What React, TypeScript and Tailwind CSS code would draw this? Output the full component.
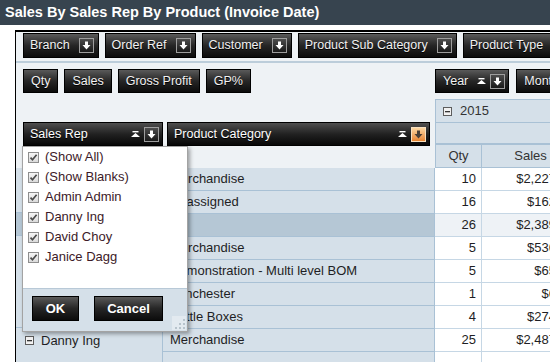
import type { ReactNode } from "react";

const sans = "font-['Liberation_Sans',Arial,sans-serif]";

type Row = { label: string; qty: string; sales: string; total?: boolean };

const rows: Row[] = [
  { label: "Merchandise", qty: "10", sales: "$2,227.72" },
  { label: "Unassigned", qty: "16", sales: "$162.00" },
  { label: "", qty: "26", sales: "$2,389.72", total: true },
  { label: "Merchandise", qty: "5", sales: "$536.40" },
  { label: "Demonstration - Multi level BOM", qty: "5", sales: "$65.00" },
  { label: "Winchester", qty: "1", sales: "$6.50" },
  { label: "Bottle Boxes", qty: "4", sales: "$274.80" },
  { label: "Merchandise", qty: "25", sales: "$2,487.50" },
  { label: "", qty: "", sales: "" },
];

const reps = ["(Show All)", "(Show Blanks)", "Admin Admin", "Danny Ing", "David Choy", "Janice Dagg"];

function ArrowBox({ active = false }: { active?: boolean }) {
  return (
    <span
      className={
        active
          ? "flex h-[15px] w-[15px] shrink-0 items-center justify-center border border-[#f7dfbf] bg-linear-to-b from-[#fbd6a0] to-[#e8842e]"
          : "flex h-[15px] w-[15px] shrink-0 items-center justify-center border border-[#9d9d9d] bg-linear-to-b from-[#4d4d4d] to-[#1a1a1a]"
      }
    >
      <svg width="9" height="9" viewBox="0 0 9 9">
        <path d="M3 0.5h3v3.5h2.5L4.5 8.5 0.5 4H3z" fill={active ? "#4a4038" : "#ffffff"} />
      </svg>
    </span>
  );
}

function SortIcon() {
  return (
    <svg width="9" height="6" viewBox="0 0 9 6" className="shrink-0">
      <rect x="1.5" y="0" width="6" height="1.4" fill="#ffffff" />
      <path d="M4.5 2 9 6H0z" fill="#ffffff" />
    </svg>
  );
}

function Collapse() {
  return (
    <svg width="9" height="9" viewBox="0 0 9 9" className="shrink-0">
      <rect x="0.5" y="0.5" width="8" height="8" fill="#f1f1f1" stroke="#5d5d5d" />
      <rect x="2" y="4" width="5" height="1.3" fill="#333333" />
    </svg>
  );
}

function Check() {
  return (
    <svg width="11" height="11" viewBox="0 0 11 11" className="shrink-0">
      <defs>
        <linearGradient id="cb" x1="0" y1="0" x2="0" y2="1">
          <stop offset="0" stopColor="#f7f7f7" />
          <stop offset="1" stopColor="#d9d9d9" />
        </linearGradient>
      </defs>
      <rect x="0.5" y="0.5" width="10" height="10" fill="url(#cb)" stroke="#8e8e8e" />
      <path d="M2.5 5.6 4.5 7.8 8.6 2.8" fill="none" stroke="#4a4a4a" strokeWidth="1.7" />
    </svg>
  );
}

function Btn({ children, h = "h-[25px]", px = "pl-[6px] pr-[4px]" }: { children: ReactNode; h?: string; px?: string }) {
  return (
    <div
      className={`flex ${h} ${px} shrink-0 items-center gap-[9px] whitespace-nowrap border border-black bg-linear-to-b from-[#5a5a5a] via-[#262626] to-[#0c0c0c] text-[12.5px] text-[#f2f2f2] [text-shadow:0_1px_0_#000]`}
    >
      {children}
    </div>
  );
}

function FieldHeader({ label, width, active = false }: { label: string; width: string; active?: boolean }) {
  return (
    <div
      className={`flex h-[24px] ${width} shrink-0 items-center border border-black bg-linear-to-b from-[#4f4f4f] via-[#222222] to-[#080808] pl-[6px] pr-[3px] text-[12.5px] text-white [text-shadow:0_1px_0_#000]`}
    >
      <span className="flex-1 whitespace-nowrap">{label}</span>
      <SortIcon />
      <span className="w-[4px]" />
      <ArrowBox active={active} />
    </div>
  );
}

export default function App() {
  return (
    <div className={`relative h-[362px] w-[550px] overflow-hidden bg-white ${sans}`}>
      <div className="h-[25px] whitespace-nowrap bg-[#37444f] pl-[5px] text-[14.5px] font-bold leading-[25px] text-white">
        Sales By Sales Rep By Product (Invoice Date)
      </div>

      <div className="ml-[15px] mt-[5px] h-[332px] overflow-hidden border-l border-t-2 border-black bg-[#eef2f5]">
        {/* Filter fields */}
        <div className="flex h-[31px] gap-[6px] border-b-2 border-[#bccdda] pl-[7px] pt-[1px]">
          {["Branch", "Order Ref", "Customer", "Product Sub Category", "Product Type"].map((f) => (
            <Btn key={f}>
              <span>{f}</span>
              <ArrowBox />
            </Btn>
          ))}
        </div>

        {/* Data fields and column fields */}
        <div className="flex h-[36px] pt-[6px]">
          <div className="flex w-[419px] shrink-0 gap-[6px] pl-[7px]">
            {["Qty", "Sales", "Gross Profit", "GP%"].map((f) => (
              <Btn key={f} h="h-[24px]" px="px-[7px]">
                {f}
              </Btn>
            ))}
          </div>
          <div className="flex shrink-0 gap-[7px]">
            <Btn h="h-[24px]" px="pl-[7px] pr-[3px]">
              <span>Year</span>
              <span className="flex items-center gap-[4px]">
                <SortIcon />
                <ArrowBox />
              </span>
            </Btn>
            <Btn h="h-[24px]" px="pl-[7px] pr-[3px]">
              <span>Month</span>
              <span className="flex items-center gap-[4px]">
                <SortIcon />
                <ArrowBox />
              </span>
            </Btn>
          </div>
        </div>

        {/* Row fields and column headers */}
        <div className="flex h-[69px]">
          <div className="flex w-[419px] shrink-0 gap-[4px] pl-[7px] pt-[23px]">
            <FieldHeader label="Sales Rep" width="w-[140px]" />
            <FieldHeader label="Product Category" width="w-[263px]" active />
          </div>
          <div className="w-[150px] shrink-0 text-[13px] text-[#333]">
            <div className="flex h-[23px] items-center gap-[8px] border-l border-t border-[#a9c1d5] bg-[#d5e0e9] pl-[7px]">
              <Collapse />
              <span>2015</span>
            </div>
            <div className="h-[23px] border-b-2 border-l border-t border-[#a9c1d5] bg-[#d5e0e9]" />
            <div className="flex h-[23px]">
              <div className="flex w-[47px] shrink-0 items-center justify-center border-b border-l border-r border-[#a9c1d5] bg-[#d5e0e9]">
                Qty
              </div>
              <div className="flex w-[98px] shrink-0 items-center justify-center border-b border-r border-[#a9c1d5] bg-[#d5e0e9]">
                Sales
              </div>
            </div>
          </div>
        </div>

        {/* Body */}
        <div className="flex text-[13px] text-[#1e1e24]">
          <div className="w-[147px] shrink-0">
            <div className="h-[45px] border-b border-r border-[#a9c1d5] bg-[#d5e0e9]" />
            <div className="h-[23px] border-b border-[#a9c1d5] bg-[#b5c7d5]" />
            <div className="h-[92px] border-b border-r border-[#a9c1d5] bg-[#d5e0e9]" />
            <div className="flex h-[60px] items-start gap-[7px] border-r border-[#a9c1d5] bg-[#d5e0e9] pl-[9px] pt-[7px]">
              <span className="mt-[1px]">
                <Collapse />
              </span>
              <span className="leading-[12px]">Danny Ing</span>
            </div>
          </div>
          <div className="shrink-0">
            {rows.map((r, i) => (
              <div key={i} className="flex h-[23px]">
                <div
                  className={`flex w-[272px] shrink-0 items-center whitespace-nowrap border-b border-r border-[#a9c1d5] pl-[7px] ${
                    r.total ? "bg-[#b5c7d5]" : "bg-[#d5e0e9]"
                  }`}
                >
                  {r.label}
                </div>
                <div
                  className={`flex w-[47px] shrink-0 items-center justify-end border-b border-r border-[#c6d7e5] pr-[5px] ${
                    r.total ? "bg-[#eef2f6]" : "bg-white"
                  }`}
                >
                  {r.qty}
                </div>
                <div
                  className={`flex w-[98px] shrink-0 items-center justify-end border-b border-r border-[#c6d7e5] pr-[5px] ${
                    r.total ? "bg-[#eef2f6]" : "bg-white"
                  }`}
                >
                  {r.sales}
                </div>
              </div>
            ))}
          </div>
        </div>
      </div>

      {/* Sales Rep filter popup */}
      <div className="absolute left-[22px] top-[146px] flex h-[186px] w-[166px] flex-col border border-[#a3a3a3] bg-white shadow-[2px_2px_4px_rgba(0,0,0,0.35)]">
        <div className="flex-1">
          {reps.map((r) => (
            <div key={r} className="flex h-[20px] items-center gap-[6px] pl-[5px] text-[13px] text-[#3c1a28]">
              <Check />
              <span className="whitespace-nowrap">{r}</span>
            </div>
          ))}
        </div>
        <div className="relative flex h-[43px] gap-[15px] border-t border-[#b8c9d7] bg-[#d5e0e9] pl-[9px] pt-[7px]">
          <div className="flex h-[25px] w-[47px] items-center justify-center border border-black bg-linear-to-b from-[#5a5a5a] via-[#262626] to-[#0c0c0c] text-[13px] font-bold text-white">
            OK
          </div>
          <div className="flex h-[25px] w-[69px] items-center justify-center border border-black bg-linear-to-b from-[#5a5a5a] via-[#262626] to-[#0c0c0c] text-[13px] font-bold text-white">
            Cancel
          </div>
          <svg width="14" height="14" viewBox="0 0 14 14" className="absolute bottom-[1px] right-[1px]">
            <rect x="0" y="0" width="14" height="14" fill="#e3eaf0" />
            {[
              [11, 3],
              [11, 7],
              [7, 7],
              [11, 11],
              [7, 11],
              [3, 11],
            ].map(([x, y]) => (
              <rect key={`${x}-${y}`} x={x} y={y} width="2" height="2" fill="#b7c3cc" />
            ))}
          </svg>
        </div>
      </div>
    </div>
  );
}
